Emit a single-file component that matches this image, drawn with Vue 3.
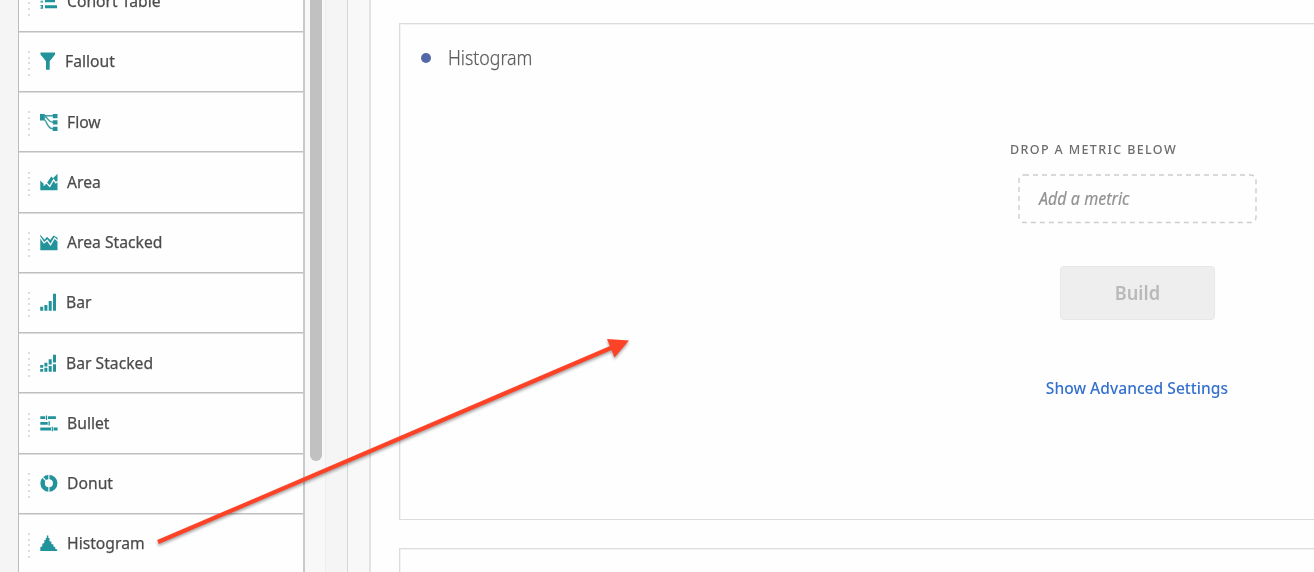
<script setup>
const items = [
  { name: 'Cohort Table', icon: 'cohort', gap: 9 },
  { name: 'Fallout', icon: 'fallout', gap: 6.5 },
  { name: 'Flow', icon: 'flow', gap: 9 },
  { name: 'Area', icon: 'area', gap: 9 },
  { name: 'Area Stacked', icon: 'areaStacked', gap: 9 },
  { name: 'Bar', icon: 'bar', gap: 7.5 },
  { name: 'Bar Stacked', icon: 'barStacked', gap: 7.5 },
  { name: 'Bullet', icon: 'bullet', gap: 9 },
  { name: 'Donut', icon: 'donut', gap: 9 },
  { name: 'Histogram', icon: 'histogram', gap: 9 },
]

// Solid shapes on an 18 x 18 grid
const icons = {
  cohort: 'M5 1h9v3H5z M5 7.300h10v3H5z M5 13.300h12v3H5z M1 1h1.500v3H1z M0.500 7h2.500v1.200H0.500z M0.500 9.200h2.500v1.200H0.500z M0.500 13h2.500v1.200H0.500z M1.500 14h1.500v1.500H1.500z M0.500 15.500h2.500v1.200H0.500z',
  fallout: 'M0.500 0.500h14.500v2L9.700 9.300V17.800H6V9.300L0.500 2.500z',
  flow: 'M0 1h4.800v6.500H0z M12.800 1h4.700v4.200h-4.700z M12.800 7.200h4.700v4.200h-4.700z M12.800 13.800h4.700V18h-4.700z',
  area: 'M0.300 7.500L4 11.300 7 9.800 11.300 3.400l1.700 1.800L17.500 0.700V17.200H0.300z',
  areaStacked: 'M0.300 1.800L4.600 6.800 7 3.800l3.200 3.200L13.500 2.500l4 2.300V17.200H0.300z',
  bar: 'M0.200 13.800h3v4h-3z M4.400 12h3v5.800h-3z M8.700 8h3v9.800h-3z M13 0.800h3v17h-3z',
  barStacked: 'M0.200 11h3v2.700h-3z M0.200 15h3v2.800h-3z M4.400 8.800h3v3.700h-3z M4.400 13.800h3v4h-3z M8.700 5.300h3v5.200h-3z M8.700 12h3v5.800h-3z M13 0.800h3v7.700h-3z M13 10.200h3v7.600h-3z',
  bullet: 'M0.300 2.300h4.900v2.800H0.300z M5.900 1.500h1.200v4.400H5.900z M8 2.300h7.900v2.800H8z M0.300 8h7.400v2.700H0.300z M8.500 7.200h1.300v4.300H8.500z M0.300 13.600h10.700v2.800H0.300z M11.700 12.800h1.200v4.400h-1.200z M13.600 13.600h4v2.800h-4z',
  histogram: 'M0.300 17v-3.800l2-1V9.800l2-0.800V6.300l1.500-0.500V4h1V1.500h1.500V4h1.200v3.200l1.900 0.500v2.300l2 0.500v2.100l1.800 0.500v1.700l2 0.800V17z',
}

// White ridge lines that cut the area shapes in two
const ridges = {
  area: 'M3.500 12.500L6.500 9.800 9.800 13.400 13.600 6.800 15.800 9.800 18 8.300',
  areaStacked: 'M0 4L4 9.900 7.300 7.300 10.500 11.800 14.500 5 18 8',
}
const dots = [0, 1, 2, 3, 4]
</script>

<template>
  <main class="workspace">
    <aside class="rail">
      <ul class="list">
        <li v-for="item in items" :key="item.name" class="item">
          <span class="grip"><i v-for="d in dots" :key="d"></i></span>
          <svg class="icon" width="18" height="18" viewBox="0 0 18 18">
            <template v-if="item.icon === 'donut'">
              <circle cx="8.900" cy="9.200" r="6.300" fill="none" stroke="#23939b" stroke-width="4.500" />
              <path d="M8.900 0v6.500M2.200 3l3.900 3.900M8.900 13v5" stroke="#fefefe" stroke-width="1.100" />
            </template>
            <path v-else :d="icons[item.icon]" fill="#23939b" />
            <path v-if="ridges[item.icon]" :d="ridges[item.icon]" fill="none" stroke="#fefefe" stroke-width="1.300" />
            <path v-if="item.icon === 'flow'" d="M4.500 2.700H13M4.500 3.500C8.500 4.500 8 9.300 13 9.300M4 6C7.500 8.500 7 15.800 13 15.800" fill="none" stroke="#3f9da3" stroke-width="1.400" />
          </svg>
          <span class="name" :style="{ marginLeft: item.gap + 'px' }">{{ item.name }}</span>
        </li>
      </ul>
      <div class="track"><div class="thumb"></div></div>
    </aside>
    <div class="gutter"></div>
    <section class="canvas">
      <article class="panel">
        <header class="heading">
          <span class="bullet"></span>
          <h2>Histogram</h2>
        </header>
        <div class="builder">
          <div class="caption"><span>DROP A METRIC BELOW</span></div>
          <div class="drop">
            <svg width="239" height="50"><rect x="1" y="1" width="237" height="47.500" rx="5" /></svg>
            <span>Add a metric</span>
          </div>
          <button class="build" disabled><span>Build</span></button>
          <a class="advanced"><span>Show Advanced Settings</span></a>
        </div>
      </article>
      <article class="panel next"></article>
    </section>
    <svg class="arrow" width="1314" height="572" viewBox="0 0 1314 572">
      <path d="M158 542L612 347.500" />
      <path class="head" d="M607 339L629 340.500L614.500 357.500z" />
    </svg>
  </main>
</template>

<style>
body { margin: 0; overflow: hidden; }
</style>

<style scoped>
* { box-sizing: border-box; }
.workspace {
  position: relative;
  display: flex;
  width: 1314px;
  height: 572px;
  overflow: hidden;
  background: #f5f5f5;
  font-family: "Noto Sans", "Open Sans", sans-serif;
}
.rail {
  display: flex;
  flex: none;
  width: 348px;
  height: 572px;
  padding-left: 18px;
  border-right: 1px solid #d7d7d7;
}
.list {
  flex: none;
  width: 287px;
  height: 640px;
  margin: -28.400px 0 0;
  padding: 0;
  list-style: none;
  background: #fefefe;
  border-left: 1px solid #bdbdbd;
  border-right: 2px solid #c9c9c9;
}
.item {
  display: flex;
  align-items: center;
  height: 60.250px;
  border-bottom: 1px solid #bfbfbf;
  box-shadow: 0 1px 0 #dedede;
}
.grip {
  display: flex;
  flex-direction: column;
  gap: 3.700px;
  width: 2px;
  margin: 4px 0 0 9px;
}
.grip i { width: 2px; height: 2px; background: #d2d2d2; border-radius: 1px; }
.icon { flex: none; margin-left: 10px; }
.name {
  color: #4b4b4b;
  font-size: 16.800px;
  line-height: 24px;
  font-weight: 400;
  white-space: nowrap;
  transform: scaleX(.935);
  transform-origin: left;
  -webkit-text-stroke: .25px #4b4b4b;
}
.track {
  width: 21px;
  padding-left: 5px;
  background: #f8f8f8;
  border-right: 1px solid #eee;
}
.thumb { width: 12px; height: 461px; background: #c1c1c1; border-radius: 0 0 6px 6px; }
.gutter { flex: none; width: 23px; background: #f8f8f8; border-right: 2px solid #e3e3e3; }
.canvas { flex: 1; padding: 23px 0 0 28px; background: #fefefe; }
.panel {
  height: 497px;
  border: 1px solid #dcdcdc;
  border-right: 0;
  box-shadow: inset 1px 1px 0 #f3f3f3;
}
.next { margin-top: 28px; }
.heading { display: flex; align-items: center; height: 68px; padding-left: 21px; }
.bullet { width: 10px; height: 10px; background: #5368a8; border-radius: 50%; }
h2 {
  margin: -1px 0 0 17px;
  color: #5c5c5c;
  font-size: 19.500px;
  line-height: 28px;
  font-weight: 300;
  transform: scaleX(.91);
  transform-origin: left;
  -webkit-text-stroke: .25px #626262;
}
.builder {
  display: flex;
  flex-direction: column;
  align-items: center;
  width: 260px;
  margin: 48px 0 0 607px;
}
.caption {
  align-self: flex-start;
  margin-left: 3px;
  color: #6c6c6c;
  font-size: 13.300px;
  font-weight: 500;
  line-height: 18px;
  letter-spacing: 1.450px;
  white-space: nowrap;
}
.caption span { display: inline-block; transform: scaleX(.94); transform-origin: left; }
.drop {
  display: flex;
  align-items: center;
  width: 239px;
  height: 50px;
  margin-top: 16px;
}
.drop svg { flex: none; margin-right: -239px; }
.drop rect { fill: none; stroke: #cdcdcd; stroke-width: 1.400; stroke-dasharray: 5 4; }
.drop span {
  margin: -2px 0 0 21.500px;
  color: #929292;
  font-size: 17.300px;
  font-style: italic;
  transform: scaleX(.93);
  transform-origin: left;
  -webkit-text-stroke: .2px #929292;
}
.build {
  width: 155px;
  height: 54px;
  margin-top: 42px;
  padding: 0;
  color: #b9b9b9;
  font: 600 18.800px "Noto Sans", "Open Sans", sans-serif;
  background: #eee;
  border: 1px solid #e7e7e7;
  border-radius: 4px;
}
.build span { display: inline-block; transform: scaleX(.97); }
.advanced {
  margin-top: 56px;
  color: #3470ce;
  font-size: 16.800px;
  font-weight: 500;
  line-height: 24px;
  white-space: nowrap;
}
.advanced span { display: inline-block; transform: scaleX(.93); }
.arrow { position: absolute; inset: 0; filter: drop-shadow(0 2px 1.500px rgba(0, 0, 0, .35)); }
.arrow path { fill: none; stroke: #fc4327; stroke-width: 4.200; }
.arrow .head { fill: #fc4327; stroke: none; }
</style>
